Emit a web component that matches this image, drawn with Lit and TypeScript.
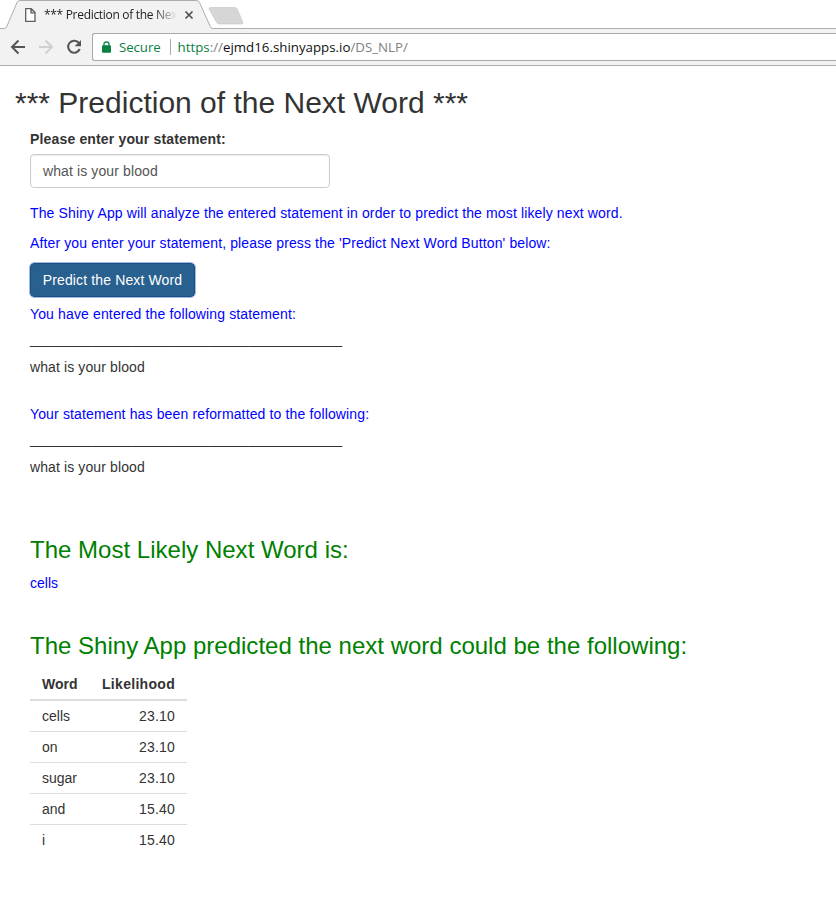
import { LitElement, html, css } from "lit";
import { customElement } from "lit/decorators.js";

@customElement("browser-chrome")
class BrowserChrome extends LitElement {
  static styles = css`
    :host { display: block; font-family: "Open Sans", "Noto Sans", sans-serif; }
    .strip { height: 29px; display: flex; position: relative; background: #fff; }
    .shape { position: absolute; left: 0; top: 0; width: 100%; height: 29px; }
    .tab { position: relative; display: flex; align-items: center; height: 29px; padding-left: 25px; }
    .title { margin-left: 8px; width: 133px; overflow: hidden; white-space: nowrap; font-size: 12px; line-height: 18px; color: #222; letter-spacing: -0.31px;
      -webkit-mask-image: linear-gradient(to right, #000 83%, transparent 100%); }
    .close { margin-left: 7px; }
    svg { display: block; flex: none; }
    .bar { height: 37px; box-sizing: border-box; background: #f2f2f2; border-bottom: 1px solid #adadad; display: flex; align-items: flex-start; padding: 4px 0 0 10px; }
    .nav { margin-top: 6px; margin-right: 12px; }
    .nav.last { margin-right: 10px; }
    .box { flex: 1; height: 28px; box-sizing: border-box; border: 1px solid #a9a9a9; border-right: 0; border-radius: 3px 0 0 3px; background: #fff; display: flex; align-items: center; font-size: 13.3px; white-space: pre; }
    .lock { margin-left: 9px; }
    .secure { color: #0b8043; margin-left: 8px; letter-spacing: -0.1px; }
    .sep { width: 1px; height: 16px; background: #aaa; margin: 0 7px 0 9px; }
    .url { color: #111; }
    .scheme { color: #0b8043; }
    .dim { color: #808080; }
  `;
  render() {
    return html`
      <div class="strip">
        <svg class="shape" viewBox="0 0 836 29" preserveAspectRatio="none">
          <path d="M0 28.5H4.5Q6 28.5 7 26L17 2.500Q18 .5 20 .5H196Q198.500 .5 199.500 2.500L210 26Q211 28.500 213 28.500H836V30H0Z" fill="#f2f2f2" stroke="#adadad"/>
          <path d="M210.500 7.500H234.500Q236.500 7.500 237.300 9L242.500 21.500Q243.500 24 241.500 24H219.500Q217.500 24 216.700 22.500L209.300 9.500Q208.500 7.500 210.500 7.500Z" fill="#d6d6d6" stroke="#c5c5c5" stroke-width=".6"/>
        </svg>
        <div class="tab">
          <svg width="11" height="14" viewBox="0 0 11 14"><path d="M.7.7H6.300L10 4.500V13.300H.7ZM6 .7V4.800H10" fill="#fff" stroke="#606060" stroke-width="1.300"/></svg>
          <span class="title">*** Prediction of the Next</span>
          <svg class="close" width="10" height="10" viewBox="0 0 10 10"><path d="M1.500 1.500L8.500 8.500M8.500 1.500L1.500 8.500" stroke="#505050" stroke-width="1.700"/></svg>
        </div>
      </div>
      <div class="bar">
        <svg class="nav" width="16" height="16" viewBox="0 0 16 16"><path d="M15 8H2.500M8.500 1.500L2 8L8.500 14.500" fill="none" stroke="#555" stroke-width="2"/></svg>
        <svg class="nav" width="16" height="16" viewBox="0 0 16 16"><path d="M1 8H13.500M7.500 1.500L14 8L7.500 14.500" fill="none" stroke="#d0d0d0" stroke-width="2"/></svg>
        <svg class="nav last" width="16" height="16" viewBox="0 0 16 16"><path d="M13 4.200A6 6 0 1 0 13.700 10" fill="none" stroke="#555" stroke-width="2.100"/><path d="M15 1V7.300H8.700Z" fill="#555"/></svg>
        <div class="box">
          <svg class="lock" width="9" height="12" viewBox="0 0 9 12"><rect y="4.300" width="9" height="7.400" rx="1" fill="#0b8043"/><path d="M2 5V3Q2 1 4.500 1Q7 1 7 3V5" fill="none" stroke="#0b8043" stroke-width="1.300"/></svg>
          <span class="secure">Secure</span><span class="sep"></span>
          <span class="url"><span class="scheme">https</span><span class="dim">://</span>ejmd16.shinyapps.io<span class="dim">/DS_NLP/</span></span>
        </div>
      </div>`;
  }
}

@customElement("app-root")
class AppRoot extends LitElement {
  static styles = css`
    :host { display: block; width: 836px; height: 924px; overflow: hidden; background: #fff; color: #333;
      font: 14px/20px "Liberation Sans", Arial, sans-serif; }
    .page { padding: 20px 15px 0; white-space: nowrap; }
    h2, h3, p { margin: 0; font-weight: 400; }
    h2 { font-size: 30px; line-height: 33px; margin-bottom: 10px; }
    .content { padding-left: 15px; }
    label { display: block; font-weight: 700; margin-bottom: 5px; letter-spacing: .16px; }
    .input { width: 300px; height: 34px; box-sizing: border-box; border: 1px solid #ccc; border-radius: 4px; padding: 6px 12px; color: #555; box-shadow: inset 0 1px 1px rgba(0,0,0,.075); margin-bottom: 15px; letter-spacing: .11px; }
    .blue { color: #00f; margin-bottom: 10px; }
    .intro { letter-spacing: .128px; }
    .echo { letter-spacing: .14px; }
    .btn { display: block; font: inherit; letter-spacing: .13px; height: 34px; width: 165px; padding: 0; margin: 0 0 7px; color: #fff; background: #286090; border: 1px solid #204d74; border-radius: 4px; outline: 1px solid #9bbcf5; white-space: nowrap; }
    .rule { margin-top: -5px; height: 28px; letter-spacing: .013px; }
    .typed { letter-spacing: .11px; margin-bottom: 27px; }
    .typed.last { margin-bottom: 60px; }
    h3 { font-size: 24px; line-height: 26px; color: green; margin-bottom: 10px; letter-spacing: .012px; }
    .answer { margin-bottom: 40px; }
    table { border-collapse: collapse; width: 157px; table-layout: fixed; }
    .col-word { width: 60px; }
    th, td { padding: 0 12px; height: 30px; border-top: 1px solid #ddd; text-align: left; }
    th { border-top: 0; border-bottom: 2px solid #ddd; }
    tbody tr:first-child td { border-top: 0; }
    .num { text-align: right; letter-spacing: .2px; }
    th.num { letter-spacing: .3px; }
  `;
  rows = [["cells", "23.10"], ["on", "23.10"], ["sugar", "23.10"], ["and", "15.40"], ["i", "15.40"]];
  render() {
    return html`<browser-chrome></browser-chrome>
      <main class="page">
        <h2>*** Prediction of the Next Word ***</h2>
        <div class="content">
          <label>Please enter your statement:</label>
          <div class="input">what is your blood</div>
          <p class="blue intro">The Shiny App will analyze the entered statement in order to predict the most likely next word.</p>
          <p class="blue intro">After you enter your statement, please press the 'Predict Next Word Button' below:</p>
          <button class="btn">Predict the Next Word</button>
          <p class="blue echo">You have entered the following statement:</p>
          <p class="rule">${"_".repeat(40)}</p>
          <p class="typed">what is your blood</p>
          <p class="blue echo">Your statement has been reformatted to the following:</p>
          <p class="rule">${"_".repeat(40)}</p>
          <p class="typed last">what is your blood</p>
          <h3>The Most Likely Next Word is:</h3>
          <p class="blue answer">cells</p>
          <h3>The Shiny App predicted the next word could be the following:</h3>
          <table>
            <colgroup><col class="col-word" /><col /></colgroup>
            <thead><tr><th>Word</th><th class="num">Likelihood</th></tr></thead>
            <tbody>${this.rows.map(([w, n]) => html`<tr><td>${w}</td><td class="num">${n}</td></tr>`)}</tbody>
          </table>
        </div>
      </main>`;
  }
}
